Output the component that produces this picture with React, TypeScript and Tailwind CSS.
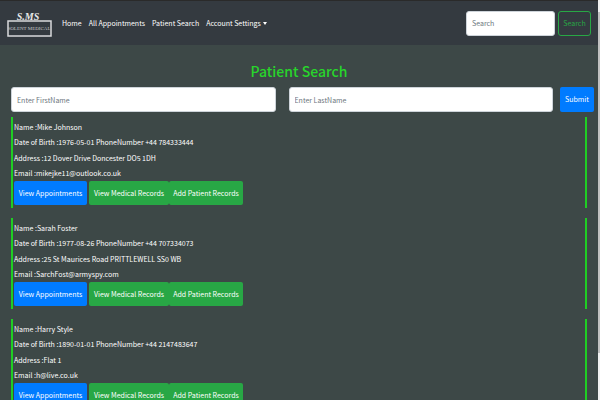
import React from "react";

const patients = [
  { name: "Mike Johnson", dob: "1976-05-01", phone: "+44 784333444", address: "12 Dover Drive Doncester DO5 1DH", email: "mikejke11@outlook.co.uk" },
  { name: "Sarah Foster", dob: "1977-08-26", phone: "+44 707334073", address: "25 St Maurices Road PRITTLEWELL SS0 WB", email: "SarchFost@armyspy.com" },
  { name: "Harry Style", dob: "1890-01-01", phone: "+44 2147483647", address: "Flat 1", email: "h@live.co.uk" },
];

const inputClass =
  "h-[25px] rounded-[3px] border border-[#ced4da] bg-white px-[5px] text-[7px] text-[#495057] placeholder:text-[#6c757d]";
const buttonClass = "h-6 rounded-[2px] whitespace-nowrap text-white";

function Logo() {
  return (
    <a href="#" aria-label="Solent Medical" className="block h-[30px] w-[45px] shrink-0">
      <svg width="45" height="30" viewBox="0 0 45 30">
        <text x="21" y="12" textAnchor="middle" fontSize="10" fontWeight="bold" fontStyle="italic" fill="#e8e8e8" fontFamily="'Liberation Serif', serif">S.MS</text>
        <rect x="1" y="13" width="43" height="15" fill="#343a40" stroke="#d9dadc" strokeWidth="1.5" />
        <text x="22" y="22" textAnchor="middle" fontSize="5" fill="#c4c7ca" fontFamily="'Liberation Serif', serif">SOLENT MEDICAL</text>
      </svg>
    </a>
  );
}

function Navbar() {
  return (
    <header className="flex h-[45px] items-center border-t border-[#2a2a2a] bg-[#343a40] pr-[7px] pl-[7px]">
      <Logo />
      <nav className="ml-[10px] flex gap-[7px] whitespace-nowrap text-white">
        <a href="#">Home</a>
        <a href="#">All Appointments</a>
        <a href="#">Patient Search</a>
        <a href="#" className="flex items-center gap-[2px]">
          Account Settings
          <svg width="4" height="3" viewBox="0 0 4 3" fill="currentColor"><path d="M0 0h4L2 3z" /></svg>
        </a>
      </nav>
      <form className="ml-auto flex gap-[3px]">
        <input aria-label="Search" placeholder="Search" className={inputClass + " w-[89px]"} />
        <button type="button" className="h-[25px] w-[33px] rounded-[3px] border border-[#28a745] text-[#28a745]">Search</button>
      </form>
    </header>
  );
}

export default function App() {
  return (
    <div className="flex h-screen overflow-hidden bg-[#3d4847] font-['Noto_Sans_CJK_SC',sans-serif] text-[7px] leading-[15px] text-white">
      <div className="min-w-0 flex-1">
        <Navbar />
        <main className="pr-1 pl-[11px]">
          <h1 className="pt-[14px] pr-[7px] text-center text-[14px] leading-6 font-medium text-[#28d52b]">Patient Search</h1>
          <form className="mt-1 flex">
            <input aria-label="First name" placeholder="Enter FirstName" className={inputClass + " min-w-0 flex-1"} />
            <input aria-label="Last name" placeholder="Enter LastName" className={inputClass + " ml-[13px] min-w-0 flex-1"} />
            <button type="button" className="ml-[7px] h-[25px] w-[34px] rounded-[2px] bg-[#007bff] text-white">Submit</button>
          </form>
          <div className="mt-[5px] mr-[7px] flex flex-col gap-[10px]">
            {patients.map((p) => (
              <article key={p.name} className="border-x-2 border-[#1fce23] px-px py-[3px]">
                <div className="flex h-[61px] flex-col justify-between">
                  <p>Name :{p.name}</p>
                  <p>Date of Birth :{p.dob} PhoneNumber {p.phone}</p>
                  <p>Address :{p.address}</p>
                  <p>Email :{p.email}</p>
                </div>
                <div className="flex">
                  <button type="button" className={buttonClass + " mr-[2px] w-[73px] bg-[#007bff]"}>View Appointments</button>
                  <button type="button" className={buttonClass + " w-20 bg-[#28a745]"}>View Medical Records</button>
                  <button type="button" className={buttonClass + " w-[74px] bg-[#28a745]"}>Add Patient Records</button>
                </div>
              </article>
            ))}
          </div>
        </main>
      </div>
      <div className="flex w-[2px] flex-col bg-[#f1f1f1] pt-3" aria-hidden="true">
        <div className="h-[341px] bg-[#c1c1c1]" />
      </div>
    </div>
  );
}
